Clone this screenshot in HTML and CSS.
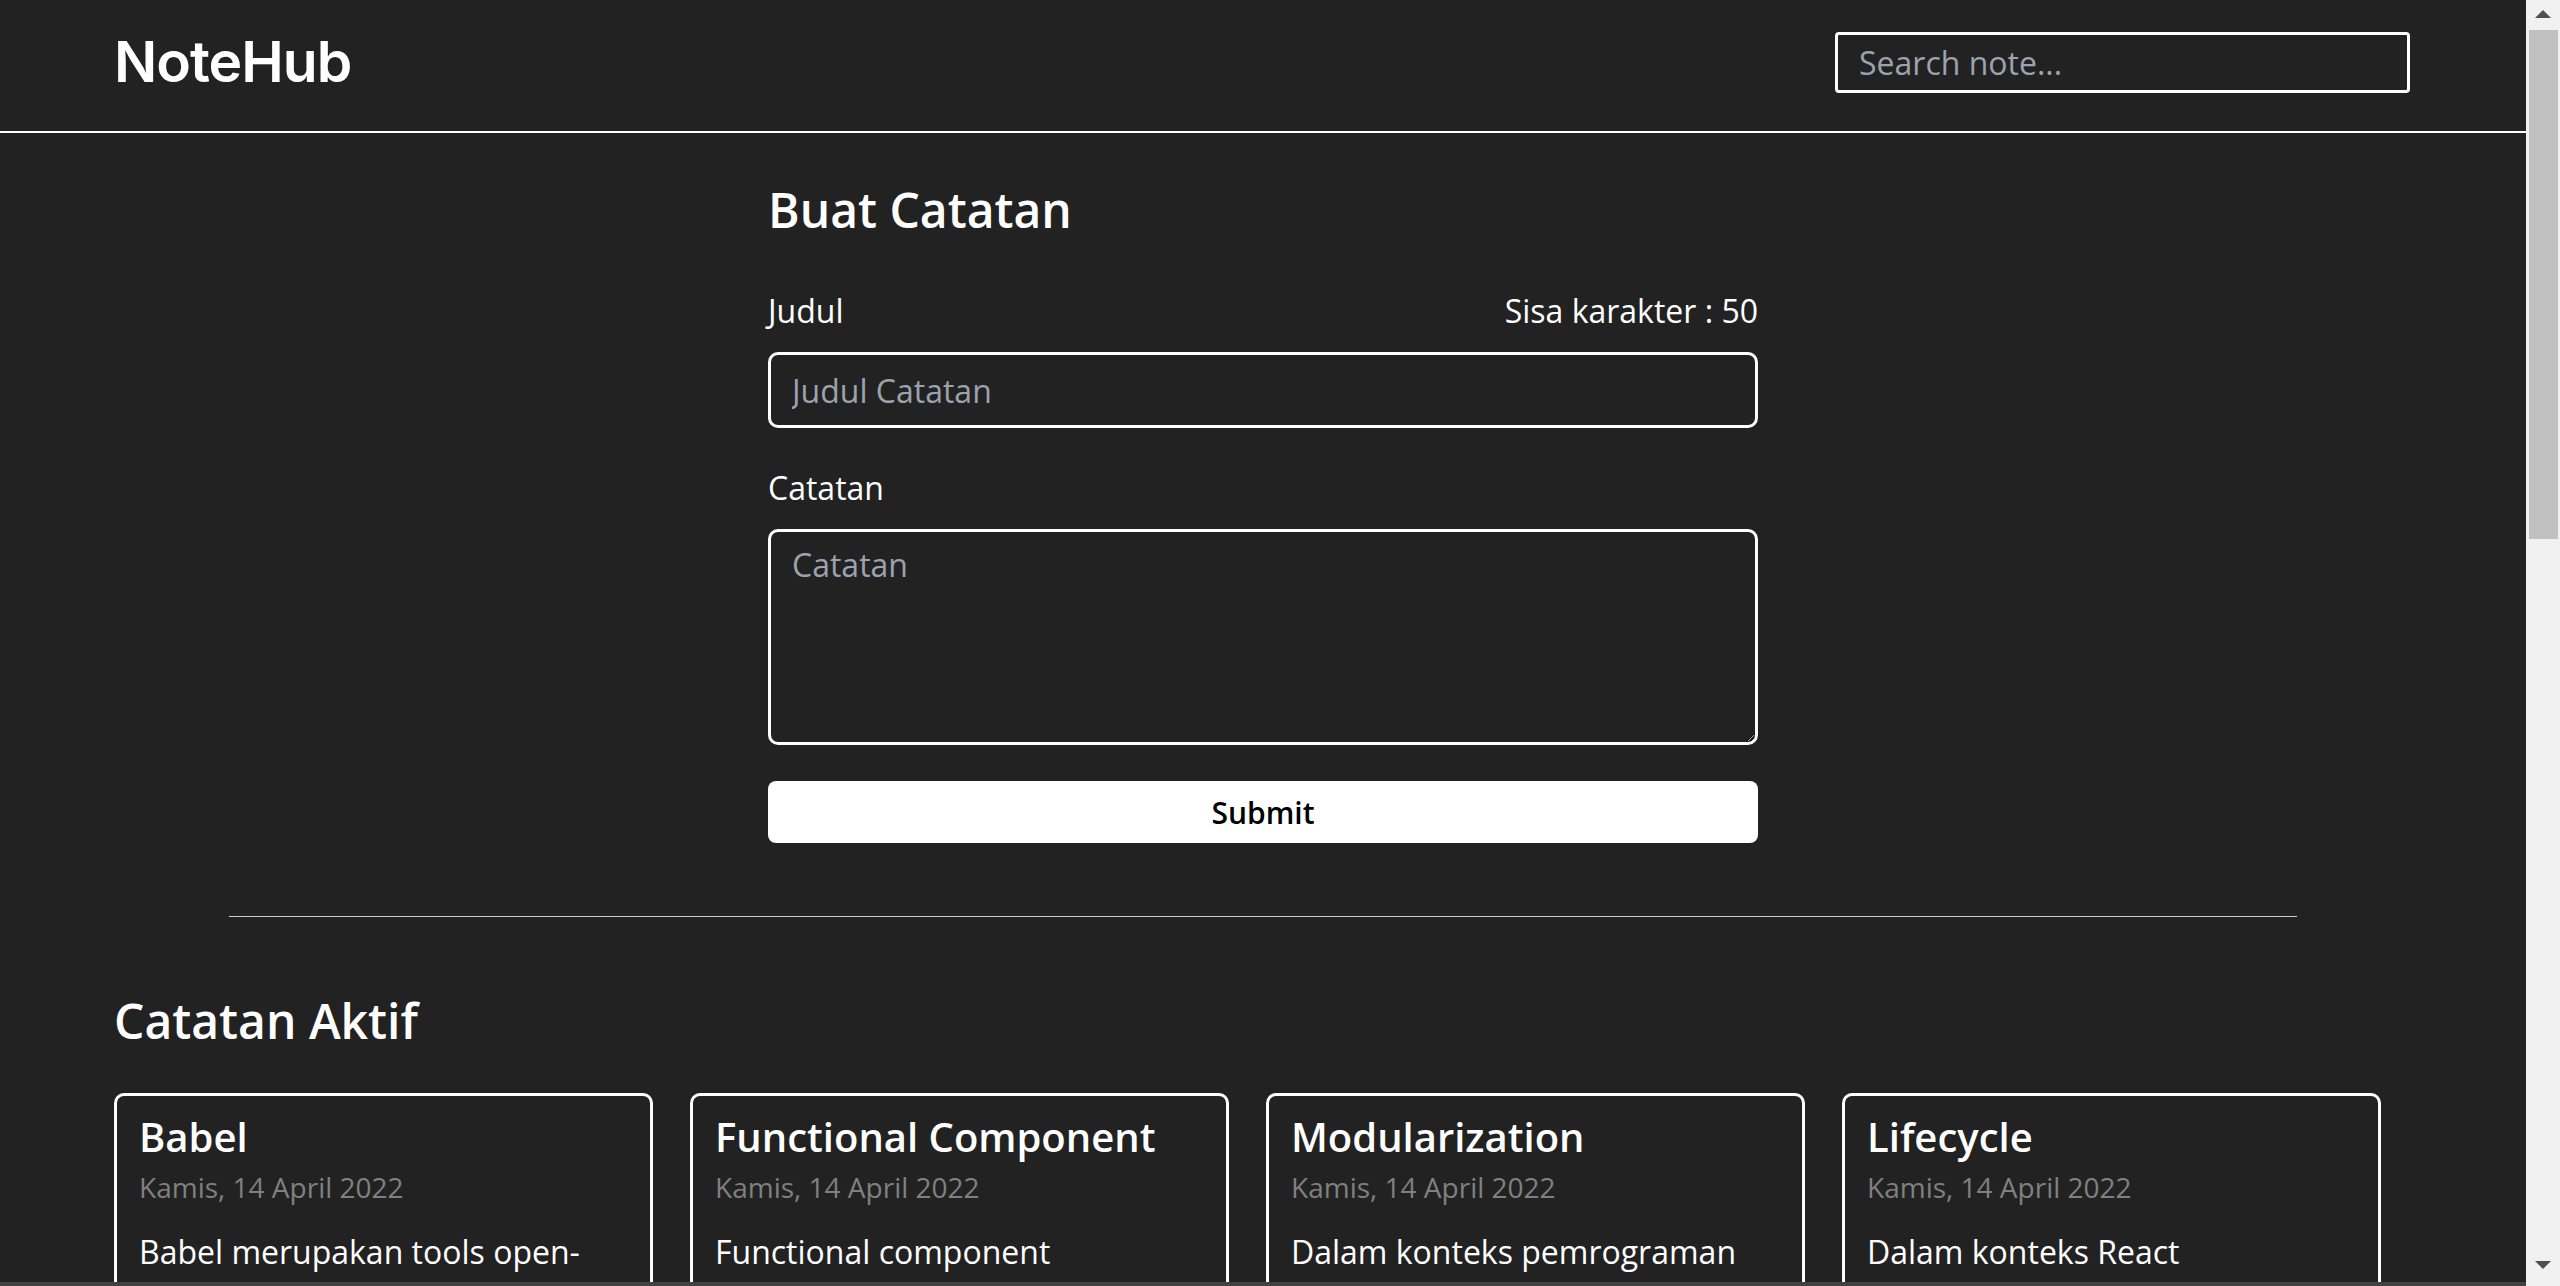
FILE: index.html
```html
<!DOCTYPE html>
<html lang="id">
<head>
<meta charset="utf-8">
<title>NoteHub</title>
<link rel="stylesheet" href="styles.css">
</head>
<body>
<div class="window">
  <div class="viewport">
    <header class="header">
      <h1 class="logo">NoteHub</h1>
      <input class="search" type="text" placeholder="Search note...">
    </header>
    <main class="main">
      <section class="form-section">
        <h2 class="form-title">Buat Catatan</h2>
        <form class="note-form">
          <div class="label-row">
            <label class="label" for="judul">Judul</label>
            <span class="counter">Sisa karakter : 50</span>
          </div>
          <input id="judul" class="field" type="text" placeholder="Judul Catatan">
          <label class="label label-gap" for="catatan">Catatan</label>
          <textarea id="catatan" class="field area" placeholder="Catatan"></textarea>
          <button class="submit" type="button">Submit</button>
        </form>
      </section>
      <section class="notes">
        <hr class="divider">
        <h2 class="notes-title">Catatan Aktif</h2>
        <div class="grid">
          <article class="card">
            <h3 class="card-title">Babel</h3>
            <p class="card-date">Kamis, 14 April 2022</p>
            <p class="card-body">Babel merupakan tools open-source yang digunakan untuk mengubah sintaks ECMAScript 2015+ menjadi sintaks yang didukung oleh JavaScript engine versi lama.</p>
          </article>
          <article class="card">
            <h3 class="card-title">Functional Component</h3>
            <p class="card-date">Kamis, 14 April 2022</p>
            <p class="card-body">Functional component merupakan React component yang dibuat menggunakan fungsi JavaScript.</p>
          </article>
          <article class="card">
            <h3 class="card-title">Modularization</h3>
            <p class="card-date">Kamis, 14 April 2022</p>
            <p class="card-body">Dalam konteks pemrograman JavaScript, modularization merupakan teknik dalam memecah atau menggunakan kode dalam berkas JavaScript secara terpisah.</p>
          </article>
          <article class="card">
            <h3 class="card-title">Lifecycle</h3>
            <p class="card-date">Kamis, 14 April 2022</p>
            <p class="card-body">Dalam konteks React component, lifecycle merupakan kumpulan method yang menjadi siklus hidup mulai dari component dibuat.</p>
          </article>
        </div>
      </section>
    </main>
  </div>
  <div class="scrollbar">
    <div class="sb-btn sb-up"><span class="arrow-up"></span></div>
    <div class="sb-track"><div class="sb-thumb"></div></div>
    <div class="sb-btn sb-down"><span class="arrow-down"></span></div>
  </div>
</div>
</body>
</html>
```

FILE: styles.css
```css
* {
  box-sizing: border-box;
}

html, body {
  margin: 0;
  padding: 0;
  height: 100%;
  overflow: hidden;
}

body {
  background: #222222;
  color: #ffffff;
  font-family: "Open Sans", "Liberation Sans", sans-serif;
}

.window {
  display: flex;
  height: 100vh;
}

.viewport {
  flex: 1;
  min-width: 0;
  overflow: hidden;
  border-bottom: 4px solid #424242;
}

/* Header */
.header {
  display: flex;
  justify-content: space-between;
  align-items: flex-start;
  height: 133px;
  padding: 32px 116px 0 114px;
  border-bottom: 2px solid #ffffff;
}

.logo {
  margin: 2px 0 0;
  font-family: Inter, "Liberation Sans", sans-serif;
  font-weight: 600;
  font-size: 57px;
  line-height: 56px;
  letter-spacing: -1px;
}

.search {
  width: 575px;
  height: 61px;
  padding: 0 21px;
  background: #222222;
  border: 3px solid #ffffff;
  border-radius: 4px;
  color: #ffffff;
  font-family: "Open Sans", "Liberation Sans", sans-serif;
  font-size: 32px;
  outline: none;
}

.search::placeholder,
.field::placeholder {
  color: #9ca3af;
}

/* Form */
.form-section {
  padding-top: 41px;
  display: flex;
  flex-direction: column;
  align-items: center;
}

.form-title {
  width: 990px;
  margin: 0 0 41px;
  font-weight: 600;
  font-size: 48px;
  line-height: 72px;
}

.note-form {
  width: 990px;
  display: flex;
  flex-direction: column;
}

.label-row {
  display: flex;
  justify-content: space-between;
  margin-bottom: 17px;
}

.label,
.counter {
  font-size: 32px;
  line-height: 48px;
}

.label-gap {
  margin-top: 36px;
  margin-bottom: 17px;
}

.field {
  width: 100%;
  height: 76px;
  padding: 0 21px;
  background: #222222;
  border: 3px solid #ffffff;
  border-radius: 10px;
  color: #ffffff;
  font-family: "Open Sans", "Liberation Sans", sans-serif;
  font-size: 32px;
  outline: none;
  color-scheme: dark;
}

.area {
  height: 216px;
  padding: 9px 21px;
  line-height: 48px;
  resize: vertical;
}

.submit {
  margin-top: 36px;
  height: 62px;
  background: #ffffff;
  color: #000000;
  border: none;
  border-radius: 8px;
  font-family: "Open Sans", "Liberation Sans", sans-serif;
  font-weight: 600;
  font-size: 30px;
}

/* Notes */
.notes {
  padding: 0 114px;
}

.divider {
  width: 90%;
  margin: 73px auto 0;
  border: 0;
  border-top: 1px solid #cfcfcf;
}

.notes-title {
  margin: 68px 0 36px;
  font-weight: 600;
  font-size: 48px;
  line-height: 72px;
}

.grid {
  display: grid;
  grid-template-columns: repeat(4, 539px);
  column-gap: 37px;
}

.card {
  border: 3px solid #ffffff;
  border-radius: 10px;
  padding: 12px 22px 24px;
}

.card-title {
  margin: 0;
  font-weight: 600;
  font-size: 40px;
  line-height: 58px;
}

.card-date {
  margin: 0;
  color: #808080;
  font-size: 28px;
  line-height: 42px;
}

.card-body {
  margin: 20px 0 0;
  font-size: 32px;
  line-height: 48px;
}

/* Scrollbar */
.scrollbar {
  width: 34px;
  flex: none;
  background: #f1f1f1;
  display: flex;
  flex-direction: column;
}

.sb-btn {
  height: 30px;
  display: flex;
  justify-content: center;
  align-items: flex-start;
}

.sb-up {
  padding-top: 10px;
}

.sb-down {
  padding-top: 5px;
}

.arrow-up {
  width: 0;
  height: 0;
  border-left: 8px solid transparent;
  border-right: 8px solid transparent;
  border-bottom: 8px solid #505050;
}

.arrow-down {
  width: 0;
  height: 0;
  border-left: 8px solid transparent;
  border-right: 8px solid transparent;
  border-top: 8px solid #505050;
}

.sb-track {
  flex: 1;
}

.sb-thumb {
  height: 509px;
  margin: 0 2px 0 3px;
  background: #c1c1c1;
}
```
